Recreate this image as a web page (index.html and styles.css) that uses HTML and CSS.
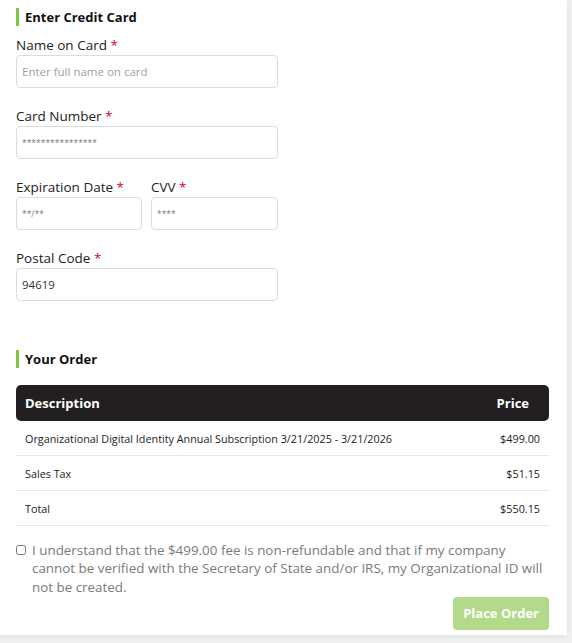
FILE: index.html
```html
<html lang="en">
    <head>
        <meta charset="UTF-8">
        <meta name="viewport" content="width=device-width, initial-scale=1.0">
        <title>Checkout</title>
        <link rel="stylesheet" href="styles.css">
    </head>
    <body>
        <div class="panel">
            <h2 class="section-title">Enter Credit Card</h2>

            <div class="field">
                <label>Name on Card <span class="req">*</span></label>
                <input type="text" placeholder="Enter full name on card">
            </div>

            <div class="field">
                <label>Card Number <span class="req">*</span></label>
                <input type="text" class="masked" value="****************">
            </div>

            <div class="field-row">
                <div class="field">
                    <label>Expiration Date <span class="req">*</span></label>
                    <input type="text" class="masked" value="**/**">
                </div>
                <div class="field">
                    <label>CVV <span class="req">*</span></label>
                    <input type="text" class="masked" value="****">
                </div>
            </div>

            <div class="field">
                <label>Postal Code <span class="req">*</span></label>
                <input type="text" value="94619">
            </div>

            <h2 class="section-title order-title">Your Order</h2>

            <table class="order">
                <thead>
                    <tr>
                        <th>Description</th>
                        <th class="price">Price</th>
                    </tr>
                </thead>
                <tbody>
                    <tr>
                        <td>Organizational Digital Identity Annual Subscription 3/21/2025 - 3/21/2026</td>
                        <td class="price">$499.00</td>
                    </tr>
                    <tr>
                        <td>Sales Tax</td>
                        <td class="price">$51.15</td>
                    </tr>
                    <tr>
                        <td>Total</td>
                        <td class="price">$550.15</td>
                    </tr>
                </tbody>
            </table>

            <label class="agree">
                <input type="checkbox">
                <span>I understand that the $499.00 fee is non-refundable and that if my company cannot be verified with the Secretary of State and/or IRS, my Organizational ID will not be created.</span>
            </label>

            <div class="actions">
                <button class="place-order" disabled>Place Order</button>
            </div>
        </div>
    </body>
</html>
```

FILE: styles.css
```css
body {
    margin: 0;
    padding: 0;
    background-color: #eef1f0;
    font-family: 'Open Sans', sans-serif;
    color: #222;
    height: 643px;
    overflow: hidden;
}
.panel {
    width: 533px;
    background-color: #ffffff;
    padding: 8px 18px 5px 16px;
    box-shadow: 0 2px 6px rgba(0, 0, 0, 0.06);
}
.section-title {
    margin: 0 0 10px 0;
    font-size: 13px;
    font-weight: bold;
    line-height: 18px;
    color: #111;
    border-left: 3px solid #7ac943;
    padding-left: 6px;
}
.field {
    display: flex;
    flex-direction: column;
    margin-bottom: 19px;
}
.field label {
    font-size: 13.5px;
    line-height: 18px;
    margin-bottom: 1px;
    color: #222;
}
.req {
    color: #d0021b;
}
.field input {
    width: 262px;
    height: 33px;
    box-sizing: border-box;
    border: 1px solid #d9dde2;
    border-radius: 4px;
    padding: 0 5px;
    font-family: inherit;
    font-size: 11.5px;
    color: #333;
}
.field input::placeholder {
    color: #9aa1aa;
}
.field input.masked {
    color: #777;
    font-size: 8.5px;
}
.field-row {
    display: flex;
    gap: 9px;
}
.field-row .field input {
    width: 126px;
}
.field-row .field:last-child input {
    width: 127px;
}
.order-title {
    margin-top: 49px;
    margin-bottom: 17px;
}
.order {
    width: 533px;
    border-collapse: separate;
    border-spacing: 0;
    font-size: 10.8px;
}
.order th {
    background-color: #231f20;
    color: #ffffff;
    font-size: 13px;
    text-align: left;
    height: 36px;
    padding: 0 9px;
}
.order th:first-child {
    border-radius: 5px 0 0 5px;
}
.order th:last-child {
    border-radius: 0 5px 5px 0;
    padding-right: 20px;
}
.order td {
    height: 35px;
    padding: 0 9px;
    border-bottom: 1px solid #e4e6ea;
    color: #222;
}
.order .price {
    text-align: right;
}
.agree {
    display: flex;
    align-items: flex-start;
    margin-top: 15px;
    font-size: 13.4px;
    line-height: 18.3px;
    color: #7a7a7a;
}
.agree input {
    margin: 4px 6px 0 0;
    width: 10px;
    height: 10px;
    flex-shrink: 0;
}
.actions {
    display: flex;
    justify-content: flex-end;
    margin-top: 1px;
}
.place-order {
    background-color: #b3d98b;
    color: #ffffff;
    border: none;
    border-radius: 4px;
    padding: 0 10px;
    height: 33px;
    font-family: inherit;
    font-size: 13px;
    font-weight: bold;
}
```
